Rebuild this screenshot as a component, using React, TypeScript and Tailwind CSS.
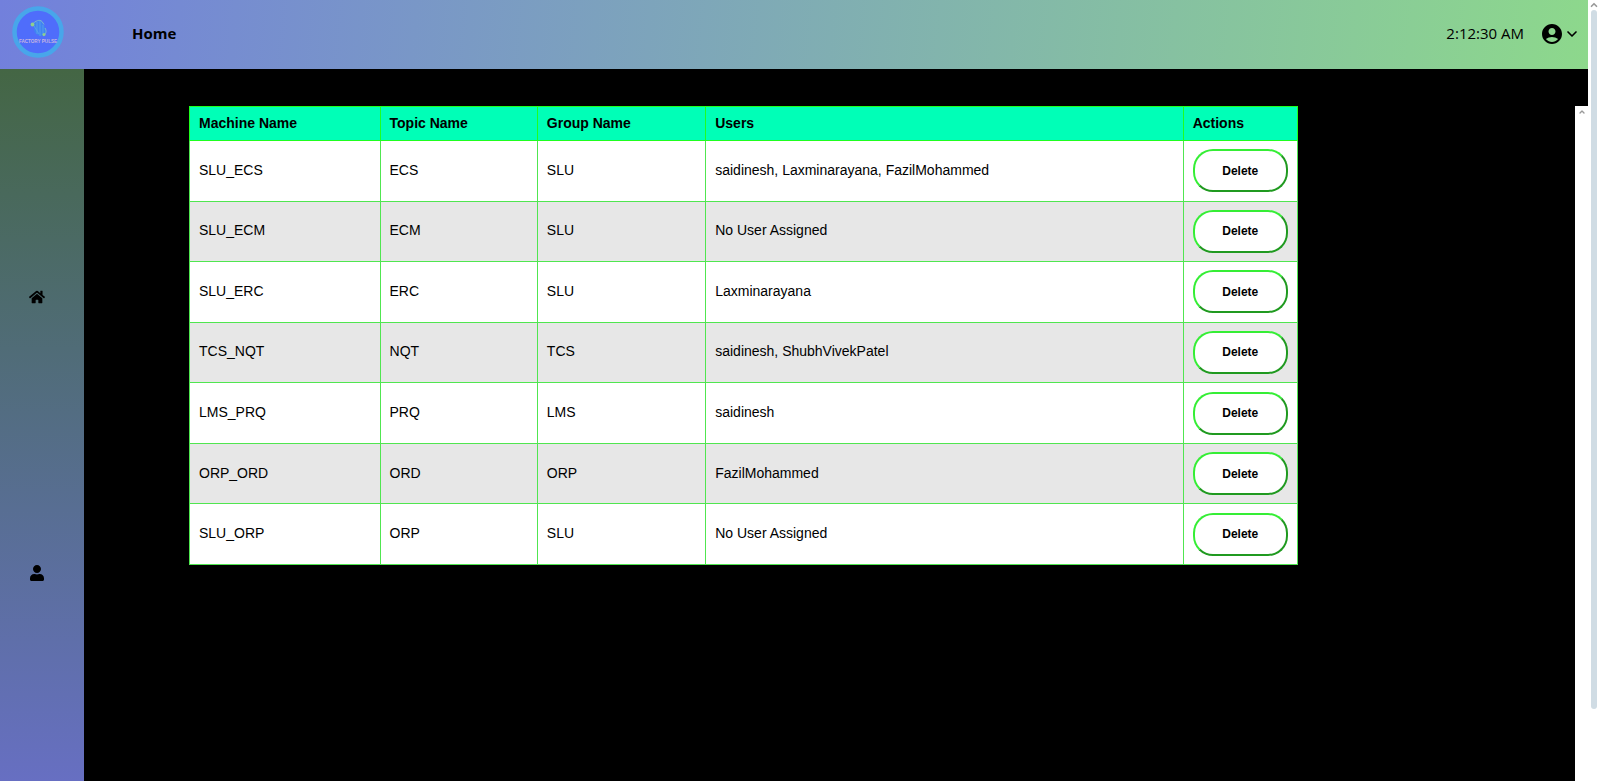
import { FaHome, FaUser } from "react-icons/fa";
import { MdAccountCircle } from "react-icons/md";
import { ChevronDown, ChevronUp } from "lucide-react";

const machines = [
  { name: "SLU_ECS", topic: "ECS", group: "SLU", users: "saidinesh, Laxminarayana, FazilMohammed" },
  { name: "SLU_ECM", topic: "ECM", group: "SLU", users: "No User Assigned" },
  { name: "SLU_ERC", topic: "ERC", group: "SLU", users: "Laxminarayana" },
  { name: "TCS_NQT", topic: "NQT", group: "TCS", users: "saidinesh, ShubhVivekPatel" },
  { name: "LMS_PRQ", topic: "PRQ", group: "LMS", users: "saidinesh" },
  { name: "ORP_ORD", topic: "ORD", group: "ORP", users: "FazilMohammed" },
  { name: "SLU_ORP", topic: "ORP", group: "SLU", users: "No User Assigned" },
];

const columns = [
  { label: "Machine Name", width: "w-[17.2%]" },
  { label: "Topic Name", width: "w-[14.2%]" },
  { label: "Group Name", width: "w-[15.2%]" },
  { label: "Users", width: "w-[43.1%]" },
  { label: "Actions", width: "w-[10.3%]" },
];

const textCell = "border border-[#50e650] px-[9px] pb-0.5";

function Logo() {
  return (
    <svg viewBox="0 0 52 52" className="size-13" role="img" aria-label="Factory Pulse">
      <circle cx="26" cy="26" r="23.5" fill="#4f6dfb" stroke="#48a6ea" strokeWidth="4.5" />
      <path d="M22 17.500c2-3 6-3.500 8-1.500l3.500 6c1.500 4-.5 7.500-4 8-4 0-7-3-7.500-6z" fill="#3f83f2" />
      <path d="M25 16v12M28 15v15M31 19v10M22 20l5 8" stroke="#5ba3ee" strokeWidth=".8" fill="none" />
      <path d="M20.500 18c3-3 7-5 9.500-2.500l2 3M33 22c2 3 1 6-2 8" stroke="#78b9cf" strokeWidth="1" fill="none" />
      <circle cx="20.500" cy="18.500" r="1.900" fill="#8fcf8e" />
      <circle cx="32" cy="28.500" r="1.500" fill="#8fcf8e" />
      <text x="26" y="37" textAnchor="middle" fontSize="4.600" fontWeight="700" fontFamily="Liberation Sans, sans-serif" fill="#c6b4e2">
        FACTORY PULSE
      </text>
    </svg>
  );
}

export default function App() {
  return (
    <div className="flex h-screen overflow-hidden bg-white font-['Liberation_Sans',sans-serif] text-black">
      <div className="flex min-w-0 flex-1 flex-col">
        <header className="flex h-[69px] shrink-0 items-center bg-[linear-gradient(95deg,#7280dc,#8dd88c)] pr-2 pb-0.5 pl-3 font-['Open_Sans',sans-serif]">
          <a href="#" className="mb-1">
            <Logo />
          </a>
          <h1 className="ml-17 text-[15px] font-bold">Home</h1>
          <time className="ml-auto text-[15px]">2:12:30 AM</time>
          <button aria-label="Account menu" className="ml-4 flex items-center">
            <MdAccountCircle className="size-6" />
            <ChevronDown className="size-4" strokeWidth={2.5} />
          </button>
        </header>
        <div className="flex min-h-0 flex-1">
          <nav className="flex w-21 shrink-0 flex-col items-center justify-center gap-65 bg-linear-to-b from-[#446644] to-[#676fc2] pt-5 pr-2.5">
            <a href="#" aria-label="Home">
              <FaHome className="size-4" />
            </a>
            <a href="#" aria-label="Users">
              <FaUser className="size-4" />
            </a>
          </nav>
          <main className="flex min-w-0 flex-1 flex-col bg-black pt-[37px]">
            <div className="flex min-h-0 flex-1">
              <div className="min-w-0 flex-1 pl-[105px]">
                <table className="h-[459px] w-4/5 table-fixed border-collapse bg-white text-left text-sm">
                  <thead>
                    <tr className="h-[34px] bg-[#00ffb7]">
                      {columns.map((column) => (
                        <th key={column.label} className={`${column.width} border border-[#1fff1f] px-[9px] pb-0.5 font-bold`}>
                          {column.label}
                        </th>
                      ))}
                    </tr>
                  </thead>
                  <tbody>
                    {machines.map((machine) => (
                      <tr key={machine.name} className="h-15 even:bg-[#e7e7e7]">
                        <td className={textCell}>{machine.name}</td>
                        <td className={textCell}>{machine.topic}</td>
                        <td className={textCell}>{machine.group}</td>
                        <td className={textCell}>{machine.users}</td>
                        <td className="border border-[#50e650] px-[9px]">
                          <button className="block h-[43px] w-full rounded-[20px] border-2 border-t-[#35ee35] border-r-[#209a20] border-b-[#209a20] border-l-[#35ee35] bg-white text-xs font-bold">
                            Delete
                          </button>
                        </td>
                      </tr>
                    ))}
                  </tbody>
                </table>
              </div>
              <div className="flex w-[13px] justify-center bg-white pt-0.5">
                <ChevronUp className="size-2 text-[#999999]" strokeWidth={4} />
              </div>
            </div>
          </main>
        </div>
      </div>
      <div className="flex w-3 shrink-0 flex-col items-center bg-white">
        <ChevronUp className="size-2.5 text-[#999999]" strokeWidth={4} />
        <div className="h-[89.500%] w-1.5 rounded-full bg-[#d0dce4]" />
      </div>
    </div>
  );
}
